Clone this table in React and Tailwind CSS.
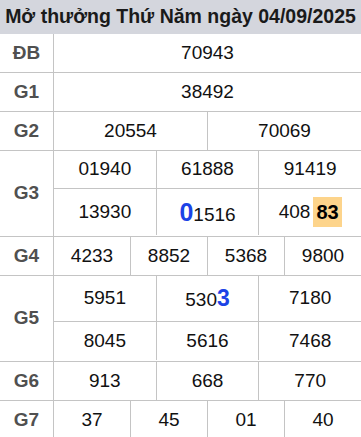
import React from "react";

const B = "border-[#c4c4c4]";

function Label({ children }) {
  return (
    <div className={`w-[54px] shrink-0 border-r ${B} flex items-center justify-center text-[19px] font-bold text-[#505050]`}>
      {children}
    </div>
  );
}

function Grid({ rows }) {
  return (
    <div className="flex-1 flex flex-col">
      {rows.map((r, ri) => (
        <div
          key={ri}
          className={`flex ${ri < rows.length - 1 ? `border-b ${B}` : ""}`}
          style={{ height: r.h }}
        >
          {r.cells.map((c, ci) => (
            <div
              key={ci}
              className={`flex-1 basis-0 flex items-center justify-center text-[19px] text-[#111] ${ci < r.cells.length - 1 ? `border-r ${B}` : ""}`}
            >
              {c}
            </div>
          ))}
        </div>
      ))}
    </div>
  );
}

function Row({ label, rows, last }) {
  const total = rows.reduce((a, r) => a + r.h, 0) + (rows.length - 1);
  return (
    <div className={`flex ${last ? "" : `border-b ${B}`}`} style={{ height: total + (last ? 0 : 1) }}>
      <Label>{label}</Label>
      <Grid rows={rows} />
    </div>
  );
}

export default function App() {
  return (
    <div
      className="w-[361px] h-[437px] overflow-hidden bg-white"
      style={{ fontFamily: '"Liberation Sans", Arial, sans-serif' }}
    >
      <div className="h-[34px] bg-[#d4d6dd] flex items-center justify-center text-[19.5px] font-bold text-[#1a1a1a] whitespace-nowrap">
        Mở thưởng Thứ Năm ngày 04/09/2025
      </div>
      <Row label="ĐB" rows={[{ h: 38, cells: ["70943"] }]} />
      <Row label="G1" rows={[{ h: 38, cells: ["38492"] }]} />
      <Row label="G2" rows={[{ h: 38, cells: ["20554", "70069"] }]} />
      <Row
        label="G3"
        rows={[
          { h: 38, cells: ["01940", "61888", "91419"] },
          {
            h: 46,
            cells: [
              "13930",
              <span className="flex items-baseline">
                <span className="text-[25px] font-bold text-[#1c43e6] leading-none">0</span>
                <span className="leading-none">1516</span>
              </span>,
              <span className="flex items-center">
                <span>408</span>
                <span className="ml-[3px] h-[30px] px-[3px] bg-[#fdd48b] flex items-center text-[20px] font-bold text-black">83</span>
              </span>,
            ],
          },
        ]}
      />
      <Row label="G4" rows={[{ h: 38, cells: ["4233", "8852", "5368", "9800"] }]} />
      <Row
        label="G5"
        rows={[
          {
            h: 46,
            cells: [
              "5951",
              <span className="flex items-baseline">
                <span className="leading-none">530</span>
                <span className="text-[23px] font-bold text-[#1c43e6] leading-none">3</span>
              </span>,
              "7180",
            ],
          },
          { h: 38, cells: ["8045", "5616", "7468"] },
        ]}
      />
      <Row label="G6" rows={[{ h: 38, cells: ["913", "668", "770"] }]} />
      <Row label="G7" last rows={[{ h: 38, cells: ["37", "45", "01", "40"] }]} />
    </div>
  );
}
